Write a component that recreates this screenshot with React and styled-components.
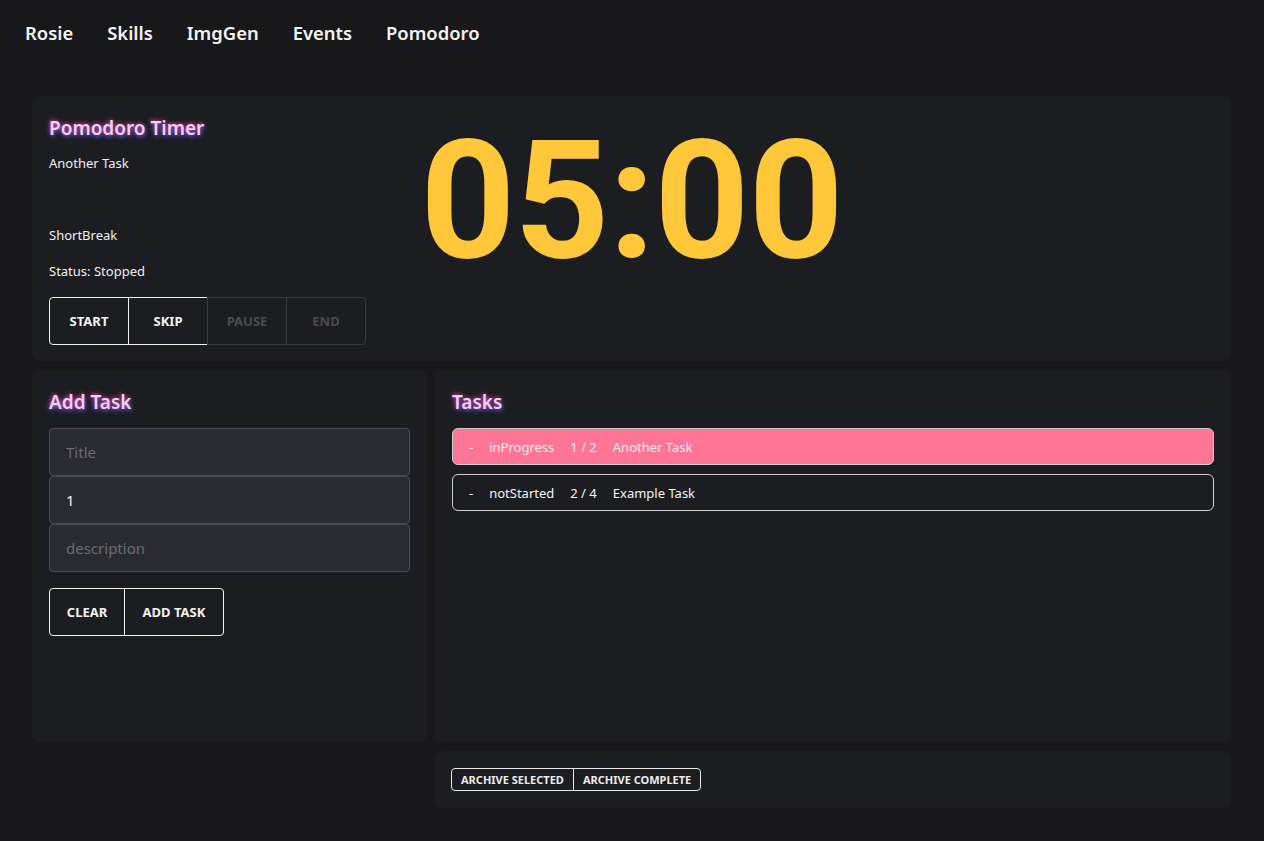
import React from 'react'
import styled, { createGlobalStyle } from 'styled-components'

const GlobalStyle = createGlobalStyle`
  html, body {
    margin: 0;
    padding: 0;
    background: #18181b;
    color: #f2f2f2;
    font-family: "Noto Sans", "Open Sans", sans-serif;
  }
  * { box-sizing: border-box; }
`

const tasks = [
  { status: 'inProgress', done: 1, total: 2, title: 'Another Task', active: true },
  { status: 'notStarted', done: 2, total: 4, title: 'Example Task', active: false },
]

const App = () => {
  return (
    <Page>
      <GlobalStyle />
      <Nav>
        <NavLink>Rosie</NavLink>
        <NavLink>Skills</NavLink>
        <NavLink>ImgGen</NavLink>
        <NavLink>Events</NavLink>
        <NavLink>Pomodoro</NavLink>
      </Nav>
      <Main>
        <TimerCard>
          <Info>
            <Title>Pomodoro Timer</Title>
            <Line>Another Task</Line>
            <Line></Line>
            <Line>ShortBreak</Line>
            <Line>Status: Stopped</Line>
            <ButtonGroup $top={-1}>
              <Button $w={80}>START</Button>
              <Button $w={80}>SKIP</Button>
              <Button $w={80} disabled>PAUSE</Button>
              <Button $w={80} disabled>END</Button>
            </ButtonGroup>
          </Info>
          <Clock>05:00</Clock>
          <div />
        </TimerCard>

        <AddCard>
          <Title>Add Task</Title>
          <Form>
            <Input placeholder="Title" />
            <Input defaultValue="1" />
            <Input placeholder="description" />
          </Form>
          <ButtonGroup $top={16}>
            <Button $w={76}>CLEAR</Button>
            <Button $w={100}>ADD TASK</Button>
          </ButtonGroup>
        </AddCard>

        <TasksCard>
          <Title>Tasks</Title>
          <TaskList>
            {tasks.map((t) => (
              <TaskRow key={t.title} $active={t.active}>
                <span>-</span>
                <span>{t.status}</span>
                <span>{t.done} / {t.total}</span>
                <span>{t.title}</span>
              </TaskRow>
            ))}
          </TaskList>
        </TasksCard>

        <ArchiveCard>
          <ButtonGroup>
            <SmallButton>ARCHIVE SELECTED</SmallButton>
            <SmallButton>ARCHIVE COMPLETE</SmallButton>
          </ButtonGroup>
        </ArchiveCard>
      </Main>
    </Page>
  )
}

const Page = styled.div`
  min-height: 841px;
  padding-bottom: 33px;
`

const Nav = styled.nav`
  display: flex;
  align-items: center;
  height: 64px;
  padding: 0 8px;
`

const NavLink = styled.a`
  padding: 0 17px;
  font-size: 18.4px;
  font-weight: 600;
  color: #f4f4f4;
  cursor: pointer;
`

const Main = styled.main`
  display: grid;
  grid-template-columns: 395px 1fr;
  grid-template-rows: auto 372px auto;
  gap: 9px 8px;
  margin-top: 32px;
  padding: 0 33px 0 32px;
`

const Card = styled.section`
  background: #1c1d21;
  border-radius: 8px;
  padding: 16px 17px;
`

const TimerCard = styled(Card)`
  grid-column: 1 / 3;
  display: grid;
  grid-template-columns: 1fr auto 1fr;
  align-items: start;
`

const AddCard = styled(Card)``

const TasksCard = styled(Card)``

const ArchiveCard = styled(Card)`
  grid-column: 2;
  padding: 17px 16px;
`

const Info = styled.div`
  display: flex;
  flex-direction: column;
`

const Title = styled.h2`
  margin: 3px 0 13px;
  font-size: 19px;
  line-height: 26px;
  font-weight: 600;
  color: #f7cdea;
  text-shadow: -1px -1px 4px rgba(255, 70, 160, 0.75), 1px 2px 4px rgba(70, 100, 255, 0.9);
`

const Line = styled.p`
  margin: 0 0 18px;
  min-height: 18px;
  font-size: 13px;
  line-height: 18px;
  color: #f0f0f0;
`

const Clock = styled.div`
  margin-top: 6px;
  font-family: Roboto, "Liberation Sans", sans-serif;
  font-size: 166px;
  line-height: 1;
  font-weight: 700;
  color: #ffc83a;
  letter-spacing: -1px;
`

const ButtonGroup = styled.div`
  display: flex;
  margin-top: ${(p) => p.$top || 0}px;

  & > button:first-child { border-radius: 4px 0 0 4px; }
  & > button:last-child { border-radius: 0 4px 4px 0; }
  & > button + button { margin-left: -1px; }
`

const Button = styled.button`
  width: ${(p) => p.$w}px;
  height: 48px;
  background: transparent;
  border: 1px solid #f2f2f2;
  border-radius: 0;
  font-family: "Noto Sans", "Open Sans", sans-serif;
  font-size: 13px;
  font-weight: 700;
  color: #f2f2f2;
  cursor: pointer;

  &:disabled {
    border-color: #3a3b40;
    color: #4a4b50;
    cursor: default;
  }
`

const SmallButton = styled.button`
  height: 23px;
  padding: 0 9px;
  background: transparent;
  border: 1px solid #e8e8e8;
  border-radius: 0;
  font-family: "Noto Sans", "Open Sans", sans-serif;
  font-size: 11px;
  font-weight: 700;
  color: #ececec;
`

const Form = styled.div`
  display: flex;
  flex-direction: column;
`

const Input = styled.input`
  height: 48px;
  padding: 0 16px;
  background: #2a2b30;
  border: 1px solid #4a4b51;
  border-radius: 4px;
  font-family: "Noto Sans", "Open Sans", sans-serif;
  font-size: 15px;
  color: #f2f2f2;
  outline: none;

  &::placeholder { color: #6a6c74; }
`

const TaskList = styled.div`
  display: flex;
  flex-direction: column;
  gap: 9px;
`

const TaskRow = styled.div`
  display: flex;
  align-items: center;
  gap: 16px;
  height: 37px;
  padding: 0 16px;
  background: ${(p) => (p.$active ? '#ff7596' : 'transparent')};
  border: 1px solid #cfcfd2;
  border-radius: 6px;
  font-size: 13px;
  color: #f4f4f4;
`

export default App
